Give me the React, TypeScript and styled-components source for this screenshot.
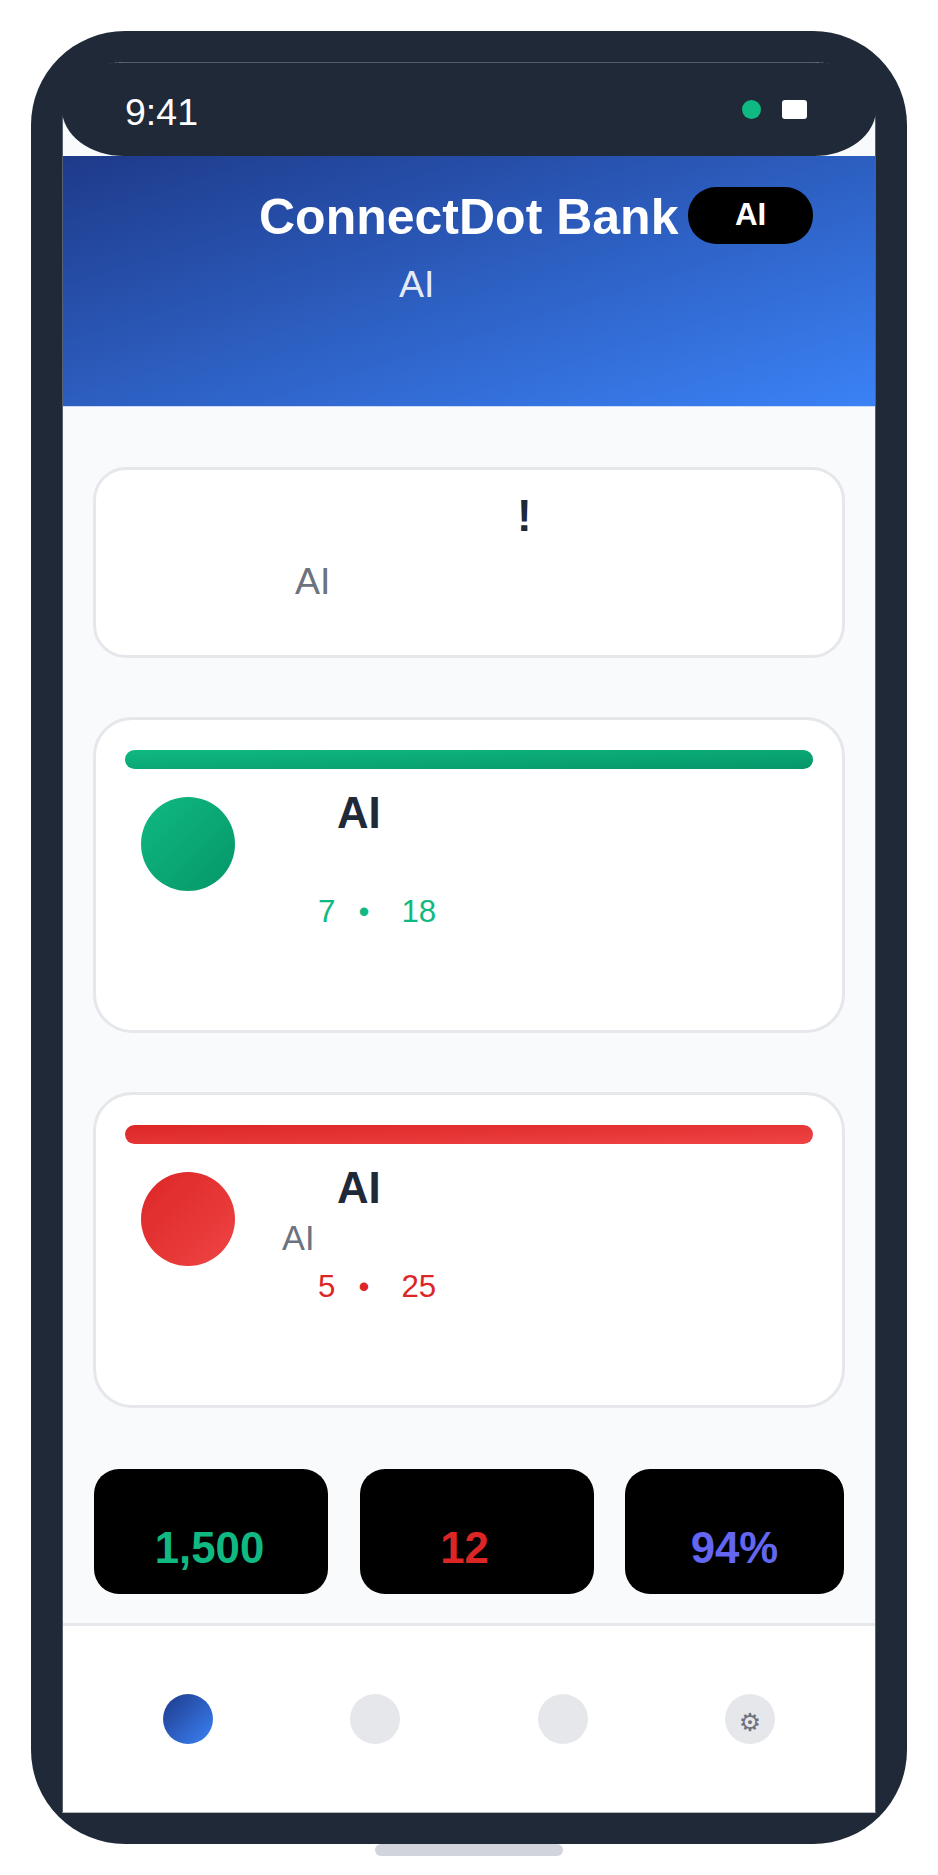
import React from "react";
import styled, { createGlobalStyle } from "styled-components";

const INK = "#1f2937";
const MUTED = "#6b7280";
const LINE = "#e5e7eb";
const BLUE = "linear-gradient(to bottom right, #1e3a8a, #3b82f6)";
const GREEN = "linear-gradient(to bottom right, #10b981, #059669)";
const RED = "linear-gradient(to bottom right, #dc2626, #ef4444)";

const GlobalStyle = createGlobalStyle`
  * { box-sizing: border-box; }
  body {
    margin: 0;
    background: #ffffff;
    font-family: "Liberation Sans", Arial, sans-serif;
  }
`;

const Page = styled.div`
  width: 938px;
  height: 1875px;
  padding-top: 31px;
  display: flex;
  flex-direction: column;
  align-items: center;
  overflow: hidden;
`;

const Phone = styled.div`
  width: 876px;
  height: 1813px;
  flex: none;
  padding: 31px 31px 0;
  border-radius: 94px;
  background: ${INK};
`;

const Screen = styled.div`
  width: 814px;
  height: 1751px;
  display: flex;
  flex-direction: column;
  border: 1px solid #596069;
  border-top: 0;
  border-bottom-color: #b5b8bd;
  border-radius: 62px 62px 0 0;
  background: #f9fafc;
`;

const StatusBar = styled.div`
  height: 94px;
  flex: none;
  display: flex;
  align-items: flex-start;
  margin: 0 -1px;
  padding: 29px 69px 0 63px;
  border-radius: 62px / 47px;
  background: linear-gradient(#555d6a, #555d6a) top / 700px 1px no-repeat ${INK};
`;

const Clock = styled.span`
  flex: 1;
  font-size: 37.5px;
  line-height: 42px;
  color: #ffffff;
`;

const Signal = styled.span`
  width: 19px;
  height: 19px;
  margin: 9px 21px 0 0;
  border-radius: 50%;
  background: #10b981;
`;

const Battery = styled.span`
  width: 25px;
  height: 19px;
  margin-top: 9px;
  border-radius: 3px;
  background: #ffffff;
`;

const Header = styled.header`
  height: 251px;
  flex: none;
  padding: 31px 62px 0 196px;
  border-bottom: 1px solid #cad9f7;
  background: ${BLUE};
  background-clip: padding-box;
`;

const HeaderRow = styled.div`
  display: flex;
  justify-content: space-between;
  align-items: flex-start;
`;

const Title = styled.h1`
  margin: 2px 0 0;
  font-size: 50px;
  line-height: 56px;
  font-weight: 700;
  color: #ffffff;
  white-space: nowrap;
`;

const Pill = styled.span`
  width: 125px;
  height: 57px;
  padding-top: 10px;
  border-radius: 28px;
  background: #000000;
  color: #ffffff;
  font-size: 31.25px;
  line-height: 35px;
  font-weight: 700;
  text-align: center;
`;

const Subtitle = styled.p`
  margin: 18px 0 0 140px;
  font-size: 37.5px;
  line-height: 42px;
  color: rgba(255, 255, 255, 0.9);
`;

const Content = styled.main`
  flex: 1;
  display: flex;
  flex-direction: column;
  padding: 60px 30px 0;
`;

const Welcome = styled.section`
  height: 191px;
  padding-top: 21px;
  border: 3px solid ${LINE};
  border-radius: 33px;
  background: #ffffff;
`;

const WelcomeTitle = styled.h2`
  margin: 0 0 20px 421px;
  font-size: 43.75px;
  line-height: 49px;
  font-weight: 700;
  color: ${INK};
`;

const WelcomeText = styled.p`
  margin: 0 0 0 199px;
  font-size: 37.5px;
  line-height: 42px;
  color: ${MUTED};
`;

const Card = styled.section`
  height: 316px;
  margin-top: 59px;
  padding: 30px 29px 0;
  border: 3px solid ${LINE};
  border-radius: 39px;
  background: #ffffff;
`;

const Bar = styled.div<{ $fill: string }>`
  height: 19px;
  border-radius: 9.5px;
  background: ${(p) => p.$fill};
`;

const CardBody = styled.div`
  display: flex;
  padding: 19px 0 0 16px;
`;

const Avatar = styled.div<{ $fill: string }>`
  width: 94px;
  height: 94px;
  margin-top: 9px;
  border-radius: 50%;
  background: ${(p) => p.$fill};
`;

const Details = styled.div`
  display: flex;
  flex-direction: column;
  padding-left: 47px;
`;

const CardTitle = styled.h3`
  margin: 0 0 0 55px;
  font-size: 43.75px;
  line-height: 49px;
  font-weight: 700;
  color: ${INK};
`;

const CardNote = styled.p`
  height: 38px;
  margin: 7px 0 0;
  font-size: 34.375px;
  line-height: 38px;
  color: ${MUTED};
`;

const Meta = styled.div<{ $color: string }>`
  display: flex;
  margin: 12px 0 0 36px;
  font-size: 31.25px;
  line-height: 35px;
  color: ${(p) => p.$color};
`;

const Bullet = styled.span`
  width: 11px;
  margin: 0 32px 0 23px;
`;

const Stats = styled.div`
  display: grid;
  grid-template-columns: 234px 234px 219px;
  justify-content: space-between;
  height: 125px;
  margin: 61px 1px 0;
`;

const Stat = styled.div<{ $color: string; $shift?: number }>`
  padding: 54px ${(p) => p.$shift ?? 0}px 0 0;
  border-radius: 25px;
  background: #000000;
  color: ${(p) => p.$color};
  font-size: 43.75px;
  line-height: 49px;
  font-weight: 700;
  text-align: center;
`;

const Nav = styled.nav`
  height: 189px;
  flex: none;
  display: flex;
  justify-content: space-between;
  padding: 68px 100px 0 100px;
  border-top: 3px solid ${LINE};
  background: #ffffff;
`;

const NavItem = styled.span<{ $active?: boolean }>`
  width: 50px;
  height: 50px;
  display: flex;
  justify-content: center;
  padding-top: 14px;
  border-radius: 50%;
  background: ${(p) => (p.$active ? BLUE : LINE)};
  color: ${MUTED};
  font-family: "DejaVu Sans", sans-serif;
  font-size: 25px;
  line-height: 29px;
`;

const HomeBar = styled.div`
  width: 188px;
  height: 12px;
  flex: none;
  border-radius: 6px;
  background: #d1d5db;
`;

interface AccountCardProps {
  fill: string;
  color: string;
  note?: string;
  first: string;
  second: string;
}

function AccountCard({ fill, color, note, first, second }: AccountCardProps) {
  return (
    <Card>
      <Bar $fill={fill} />
      <CardBody>
        <Avatar $fill={fill} />
        <Details>
          <CardTitle>AI</CardTitle>
          <CardNote>{note}</CardNote>
          <Meta $color={color}>
            <span>{first}</span>
            <Bullet>•</Bullet>
            <span>{second}</span>
          </Meta>
        </Details>
      </CardBody>
    </Card>
  );
}

export default function App() {
  return (
    <Page>
      <GlobalStyle />
      <Phone>
        <Screen>
          <StatusBar>
            <Clock>9:41</Clock>
            <Signal />
            <Battery />
          </StatusBar>
          <Header>
            <HeaderRow>
              <Title>ConnectDot Bank</Title>
              <Pill>AI</Pill>
            </HeaderRow>
            <Subtitle>AI</Subtitle>
          </Header>
          <Content>
            <Welcome>
              <WelcomeTitle>!</WelcomeTitle>
              <WelcomeText>AI</WelcomeText>
            </Welcome>
            <AccountCard fill={GREEN} color="#10b981" first="7" second="18" />
            <AccountCard fill={RED} color="#dc2626" note="AI" first="5" second="25" />
            <Stats>
              <Stat $color="#10b981" $shift={3}>1,500</Stat>
              <Stat $color="#dc2626" $shift={24}>12</Stat>
              <Stat $color="#6366f1">94%</Stat>
            </Stats>
          </Content>
          <Nav>
            <NavItem $active />
            <NavItem />
            <NavItem />
            <NavItem>⚙</NavItem>
          </Nav>
        </Screen>
      </Phone>
      <HomeBar />
    </Page>
  );
}
